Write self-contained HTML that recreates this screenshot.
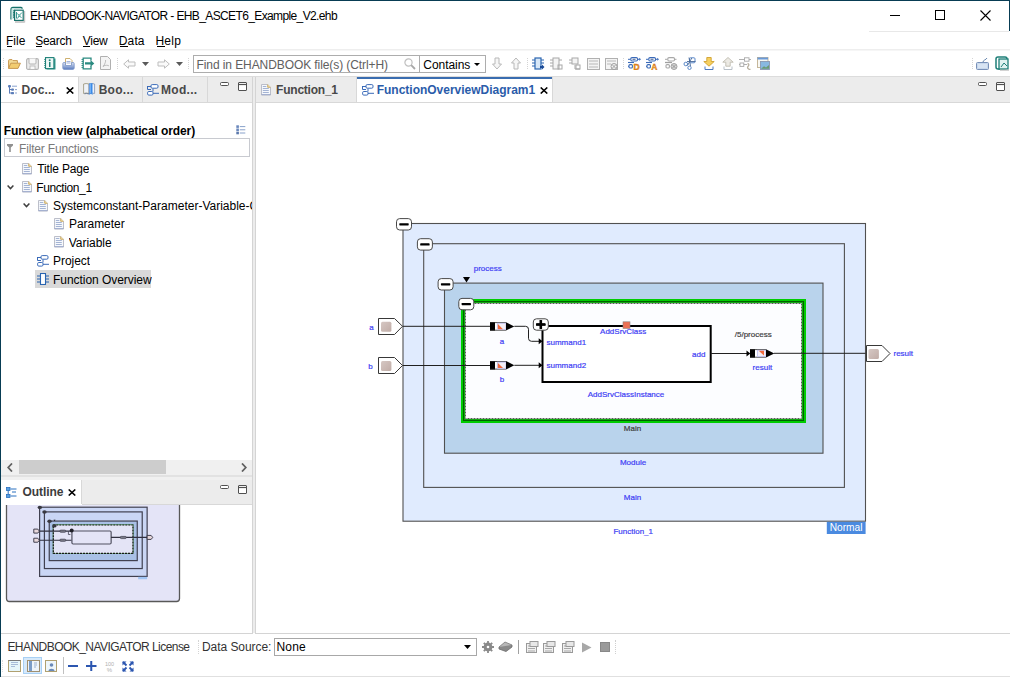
<!DOCTYPE html>
<html><head><meta charset="utf-8">
<style>
*{margin:0;padding:0;box-sizing:border-box}
html,body{width:1010px;height:677px;overflow:hidden;background:#fff;font-family:"Liberation Sans",sans-serif;color:#000}
.a{position:absolute}
.t{position:absolute;white-space:nowrap;line-height:1}
</style></head><body>
<div class="a" style="left:0;top:0;width:1010px;height:677px;background:#fff">

<!-- window border -->
<div class="a" style="left:0;top:0;width:1010px;height:1px;background:#083c54"></div>
<div class="a" style="left:0;top:0;width:1px;height:677px;background:#083c54"></div>

<!-- title -->
<div class="t" style="left:30px;top:10.00px;font-size:12px;color:#000;letter-spacing:-0.620px">EHANDBOOK-NAVIGATOR - EHB_ASCET6_Example_V2.ehb</div>


<!-- title icon -->
<svg class="a" style="left:6px;top:4px" width="22" height="22" viewBox="0 0 22 22">
<rect x="9" y="17.3" width="9.5" height="1.4" fill="#b8b8b8"/><rect x="18" y="7" width="1.2" height="11.5" fill="#c8c8c8"/>
<path d="M5 15.5V6Q5 3.5 7 3.5H15Q16.2 3.5 16.2 4.8" fill="none" stroke="#17716a" stroke-width="1.3"/>
<rect x="5.6" y="4.2" width="3" height="11" fill="#cfe9e5"/>
<path d="M7.2 6.5l1.4 0.9-1.4 0.9 1.4 0.9-1.4 0.9 1.4 0.9-1.4 0.9 1.4 0.9-1.4 0.9" fill="none" stroke="#17716a" stroke-width="0.9"/>
<rect x="8.6" y="6.2" width="8.6" height="10.2" fill="#fff" stroke="#17716a" stroke-width="1.2"/>
<path d="M10.5 8v6.5M11.5 14.5L13 12L15.5 13.5M11.5 9.5L13 11.5L16 8.5" fill="none" stroke="#3a9a90" stroke-width="1"/>
<circle cx="13.6" cy="11.3" r="1" fill="#7cc0b8"/>
</svg>
<!-- window controls -->
<div class="a" style="left:890px;top:15px;width:10px;height:1px;background:#000"></div>
<div class="a" style="left:935px;top:10px;width:10px;height:10px;border:1px solid #000"></div>
<svg class="a" style="left:980px;top:10px" width="11" height="11" viewBox="0 0 11 11"><path d="M0.5 0.5L10.5 10.5M10.5 0.5L0.5 10.5" stroke="#000" stroke-width="1.1"/></svg>
<div class="a" style="left:1009px;top:0;width:1px;height:31px;background:#083c54"></div>
<div class="a" style="left:869px;top:31px;width:140px;height:1px;background:#e8e8e8"></div>

<!-- menu -->
<div class="t" style="left:6px;top:35.20px;font-size:12px;color:#000;letter-spacing:0.033px">File</div>
<div class="t" style="left:35.2px;top:35.20px;font-size:12px;color:#000;letter-spacing:-0.260px">Search</div>
<div class="t" style="left:82.8px;top:35.20px;font-size:12px;color:#000;letter-spacing:-0.300px">View</div>
<div class="t" style="left:118.8px;top:35.20px;font-size:12px;color:#000;letter-spacing:0.133px">Data</div>
<div class="t" style="left:155.4px;top:35.20px;font-size:12px;color:#000;letter-spacing:0.300px">Help</div>
<div class="a" style="left:1px;top:49px;width:1009px;height:1px;background:#eeeeee"></div><div class="a" style="left:1px;top:50px;width:1009px;height:1px;background:#f6f6f6"></div>

<div class="a" style="left:7px;top:46px;width:5px;height:1px;background:#000"></div>
<div class="a" style="left:36px;top:46px;width:6px;height:1px;background:#000"></div>
<div class="a" style="left:83px;top:46px;width:7px;height:1px;background:#000"></div>
<div class="a" style="left:120px;top:46px;width:8px;height:1px;background:#000"></div>
<div class="a" style="left:157px;top:46px;width:8px;height:1px;background:#000"></div>
<div class="a" style="left:3px;top:58px;width:1px;height:11px;border-left:1px dotted #d4d4d4"></div>
<!-- toolbar -->
<svg class="a" style="left:8px;top:59px" width="13" height="10" viewBox="0 0 13 10"><path d="M0.6 9.4V1.6Q0.6 0.6 1.6 0.6H4L5 1.6H9.4V4" fill="#f4dc98" stroke="#c89850" stroke-width="1"/><path d="M0.6 9.4L2.8 4.2H12.4L10 9.4z" fill="#f2cc70" stroke="#c89850" stroke-width="1"/></svg>
<svg class="a" style="left:26px;top:58px" width="13" height="12" viewBox="0 0 13 12"><rect x="0.6" y="0.6" width="11.8" height="10.8" rx="1.5" fill="#ececec" stroke="#b4b4b4" stroke-width="1.1"/><path d="M3 0.6V5Q3 6 4 6H9Q10 6 10 5V0.6" fill="#f8f8f8" stroke="#b4b4b4"/><rect x="4" y="8" width="5" height="3.4" fill="#f8f8f8" stroke="#b4b4b4" stroke-width="0.8"/></svg>
<svg class="a" style="left:44px;top:57px" width="12" height="13" viewBox="0 0 12 13"><rect x="2.5" y="1.5" width="9" height="11" fill="#3a9a90"/><rect x="1.5" y="0.6" width="8.4" height="11" fill="#eef8f6" stroke="#1e8078" stroke-width="1.1"/><path d="M0.3 2.5h1.6M0.3 4.5h1.6M0.3 6.5h1.6M0.3 8.5h1.6M0.3 10.5h1.6" stroke="#1e8078" stroke-width="0.9"/><circle cx="5.7" cy="3.3" r="1" fill="#1e8078"/><rect x="5" y="5" width="1.5" height="5" fill="#1e8078"/></svg>
<svg class="a" style="left:62px;top:58px" width="13" height="12" viewBox="0 0 13 12"><defs><linearGradient id="trg" x1="0" y1="0" x2="0" y2="1"><stop offset="0" stop-color="#dfe6f4"/><stop offset="1" stop-color="#5a7cc0"/></linearGradient></defs><path d="M3.5 7V0.5H8L10 2.5V7" fill="#fff" stroke="#c8a860" stroke-width="0.9"/><path d="M4.5 3.5h4M4.5 5h4" stroke="#8aa0d0" stroke-width="0.8"/><path d="M0.8 5.5Q0.8 4.5 2 4.5H3.5V7.5H9.5V4.5H11Q12.2 4.5 12.2 5.5V10Q12.2 11.4 10.8 11.4H2.2Q0.8 11.4 0.8 10z" fill="url(#trg)" stroke="#7a94c8" stroke-width="0.8"/></svg>
<svg class="a" style="left:81px;top:57px" width="14" height="13" viewBox="0 0 14 13"><path d="M10 3.5V1.2H2.2v10.6H10V9" fill="none" stroke="#2a8a80" stroke-width="1.3"/><path d="M0.5 2.5h1.5M0.5 4.5h1.5M0.5 6.5h1.5M0.5 8.5h1.5M0.5 10.5h1.5" stroke="#2a8a80" stroke-width="0.9"/><path d="M4 5.2h5.5V3L13.3 6.4L9.5 9.8V7.6H4z" fill="#2a8a80"/></svg>
<svg class="a" style="left:100px;top:56px" width="11" height="14" viewBox="0 0 11 14"><path d="M0.5 0.5h7l3 3v10h-10z" fill="#f4f4f4" stroke="#b0b0b0"/><path d="M3 11c2-3 3-6 2.5-7M3 10c3-1 5-1 6 0" stroke="#b0b0b0" fill="none" stroke-width="0.8"/></svg>
<div class="a" style="left:117px;top:58px;width:1px;height:11px;border-left:1px dotted #d4d4d4"></div>
<svg class="a" style="left:123px;top:59px" width="13" height="10" viewBox="0 0 13 10"><path d="M0.7 5L5.5 0.8V3h6.5v4H5.5v2.2z" fill="#fafafa" stroke="#bdbdbd" stroke-width="1"/></svg>
<svg class="a" style="left:142px;top:62px" width="7" height="4" viewBox="0 0 7 4"><path d="M0 0h7L3.5 4z" fill="#5a5a5a"/></svg>
<svg class="a" style="left:157px;top:59px" width="13" height="10" viewBox="0 0 13 10"><path d="M12.3 5L7.5 0.8V3H1v4h6.5v2.2z" fill="#fafafa" stroke="#bdbdbd" stroke-width="1"/></svg>
<svg class="a" style="left:176px;top:62px" width="7" height="4" viewBox="0 0 7 4"><path d="M0 0h7L3.5 4z" fill="#5a5a5a"/></svg>
<div class="a" style="left:188px;top:58px;width:1px;height:11px;border-left:1px dotted #d4d4d4"></div>
<div class="a" style="left:193px;top:55px;width:293px;height:18px;border:1px solid #adadad;background:#fff"></div>
<div class="a" style="left:419px;top:56px;width:1px;height:16px;background:#adadad"></div>
<div class="t" style="left:196.5px;top:59.00px;font-size:12px;color:#606060;letter-spacing:-0.085px">Find in EHANDBOOK file(s) (Ctrl+H)</div>
<svg class="a" style="left:404px;top:58px" width="12" height="12" viewBox="0 0 12 12"><circle cx="4.5" cy="4.5" r="3.6" fill="none" stroke="#c0c0c0" stroke-width="1.2"/><path d="M7.2 7.2L11 11" stroke="#a8a8a8" stroke-width="1.8"/></svg>
<div class="t" style="left:423.3px;top:59.00px;font-size:12px;color:#000;letter-spacing:-0.057px">Contains</div>
<svg class="a" style="left:474px;top:63px" width="6" height="3" viewBox="0 0 6 3"><path d="M0 0h6L3 3z" fill="#000"/></svg>
<svg class="a" style="left:492px;top:57px" width="10" height="13" viewBox="0 0 10 13"><path d="M3 1h4v6h2.5L5 12 0.5 7H3z" fill="#f6f6f6" stroke="#b8b8b8"/></svg>
<svg class="a" style="left:511px;top:57px" width="10" height="13" viewBox="0 0 10 13"><path d="M3 12h4V6h2.5L5 1 0.5 6H3z" fill="#f6f6f6" stroke="#b8b8b8"/></svg>
<div class="a" style="left:527px;top:58px;width:1px;height:11px;border-left:1px dotted #d4d4d4"></div>
<svg class="a" style="left:532px;top:57px" width="13" height="13" viewBox="0 0 13 13"><rect x="3" y="1" width="6" height="11" fill="#d8e8f8" stroke="#2a64b0" stroke-width="1.2"/><path d="M0 3h3M0 6h3M0 9h3M9 3h3M9 6h3" stroke="#2a64b0" stroke-width="1.2"/><path d="M8 9h2V7.5l2.5 2.5L10 12.5V11H8z" fill="#1a4a98"/></svg>
<svg class="a" style="left:550px;top:57px" width="13" height="13" viewBox="0 0 13 13"><rect x="3" y="1" width="6" height="11" fill="#f4f4f4" stroke="#a8a8a8" stroke-width="1"/><path d="M0 3h3M0 6h3M0 9h3M9 3h3" stroke="#a8a8a8"/><rect x="8" y="8" width="4" height="4" fill="none" stroke="#a8a8a8"/></svg>
<svg class="a" style="left:569px;top:57px" width="12" height="13" viewBox="0 0 12 13"><rect x="3" y="1" width="6" height="6" fill="#f4f4f4" stroke="#a8a8a8"/><path d="M0 3h3M0 6h3M6 8v4h5" stroke="#a8a8a8" fill="none"/><rect x="7" y="8" width="4" height="4" fill="none" stroke="#a8a8a8"/></svg>
<svg class="a" style="left:587px;top:58px" width="13" height="12" viewBox="0 0 13 12"><rect x="0.5" y="0.5" width="12" height="11" fill="#f4f4f4" stroke="#b0b0b0"/><path d="M2 3h9M2 6h9M2 9h9" stroke="#b8b8b8" stroke-width="1.2"/></svg>
<svg class="a" style="left:605px;top:58px" width="14" height="12" viewBox="0 0 14 12"><rect x="0.5" y="0.5" width="12" height="11" fill="#f4f4f4" stroke="#b0b0b0"/><path d="M2 3h9M2 6h4" stroke="#b8b8b8"/><circle cx="9" cy="8.5" r="3" fill="none" stroke="#a0a0a0"/><path d="M7 6.5l4 4M11 6.5l-4 4" stroke="#a0a0a0"/></svg>
<div class="a" style="left:623px;top:58px;width:1px;height:11px;border-left:1px dotted #d4d4d4"></div>
<svg class="a" style="left:628px;top:57px" width="13" height="13" viewBox="0 0 13 13"><path d="M0 2.3h2.5M9.5 2.3h2" stroke="#3a6ab8" stroke-width="1"/><path d="M11.2 0.8L13 2.3L11.2 3.8z" fill="#3a6ab8"/><rect x="2.8" y="0.6" width="6.7" height="3.4" rx="1.2" fill="#fff" stroke="#3a6ab8" stroke-width="1.1"/><path d="M4.5 2.3h3" stroke="#1a3a78" stroke-width="0.8"/><path d="M0 5.5h6" stroke="#3a6ab8" stroke-width="1.1"/><path d="M0 9.3h1" stroke="#3a6ab8"/><rect x="1" y="7.6" width="3.4" height="3.4" rx="1" fill="#fff" stroke="#3a6ab8" stroke-width="1.1"/><text x="5.6" y="12.8" font-family="Liberation Sans" font-weight="bold" font-size="8.5" fill="#e89020" stroke="#d07010" stroke-width="0.4">D</text></svg>
<svg class="a" style="left:646px;top:57px" width="13" height="13" viewBox="0 0 13 13"><path d="M0 2.3h2.5M9.5 2.3h2" stroke="#3a6ab8" stroke-width="1"/><path d="M11.2 0.8L13 2.3L11.2 3.8z" fill="#3a6ab8"/><rect x="2.8" y="0.6" width="6.7" height="3.4" rx="1.2" fill="#fff" stroke="#3a6ab8" stroke-width="1.1"/><path d="M4.5 2.3h3" stroke="#1a3a78" stroke-width="0.8"/><path d="M0 5.5h6" stroke="#3a6ab8" stroke-width="1.1"/><path d="M0 9.3h1" stroke="#3a6ab8"/><rect x="1" y="7.6" width="3.4" height="3.4" rx="1" fill="#fff" stroke="#3a6ab8" stroke-width="1.1"/><text x="5.2" y="12.8" font-family="Liberation Sans" font-weight="bold" font-size="8.5" fill="#f0a030" stroke="#d07010" stroke-width="0.4">A</text></svg>
<svg class="a" style="left:665px;top:57px" width="13" height="13" viewBox="0 0 13 13"><path d="M0 2.3h2.5M9.5 2.3h2" stroke="#a8a8a8" stroke-width="1"/><rect x="2.8" y="0.6" width="6.7" height="3.4" rx="1.2" fill="#fff" stroke="#a8a8a8" stroke-width="1.1"/><path d="M0 5.5h7" stroke="#a0a0a0" stroke-width="1.3"/><rect x="1" y="7.6" width="3.4" height="3.4" rx="1" fill="#fff" stroke="#a8a8a8" stroke-width="1.1"/><circle cx="9" cy="9.5" r="3" fill="#d8d8d8" stroke="#a0a0a0" stroke-width="1"/><path d="M7.3 7.8l3.4 3.4M10.7 7.8l-3.4 3.4" stroke="#909090" stroke-width="0.9"/></svg>
<svg class="a" style="left:683px;top:57px" width="13" height="13" viewBox="0 0 13 13"><rect x="6.5" y="0.8" width="5.5" height="5" rx="1" fill="none" stroke="#5a88c8" stroke-width="1"/><circle cx="2.8" cy="7" r="1.8" fill="none" stroke="#5a88c8" stroke-width="1"/><circle cx="6.5" cy="10.8" r="1.7" fill="none" stroke="#5a88c8" stroke-width="1"/><path d="M4 4.5h8.5M6 0.5L7.5 9M8.8 1L4.5 8.5" stroke="#4a6a98" stroke-width="0.9"/></svg>
<svg class="a" style="left:703px;top:57px" width="12" height="13" viewBox="0 0 12 13"><path d="M2 9.5v3h8v-3" stroke="#4a78c0" fill="none" stroke-width="1"/><path d="M3.8 0.5h4.4v4h3L6 9.2 0.8 4.5h3z" fill="#f6d060" stroke="#d0a030" stroke-width="0.9"/></svg>
<svg class="a" style="left:722px;top:57px" width="12" height="13" viewBox="0 0 12 13"><path d="M2 9.5v3h8v-3" stroke="#b8c0c8" fill="none" stroke-width="1"/><path d="M3.8 9.2h4.4v-4h3L6 0.5 0.8 5.2h3z" fill="#eceae4" stroke="#c0bcb0" stroke-width="0.9"/></svg>
<svg class="a" style="left:739px;top:57px" width="13" height="13" viewBox="0 0 13 13"><path d="M0 2.5h12M0 7.5h8" stroke="#b0b0b0" stroke-width="1"/><rect x="5.5" y="0.8" width="4.5" height="3.4" fill="#fff" stroke="#a8a8a8" stroke-width="0.9"/><rect x="1" y="6" width="3.8" height="3.4" fill="#fff" stroke="#a8a8a8" stroke-width="0.9"/><path d="M8.5 6.5c2 0.5 1.5 2 0.5 3s0 3 2.5 3" stroke="#b8b0a0" fill="none" stroke-width="1.3"/></svg>
<svg class="a" style="left:757px;top:57px" width="13" height="13" viewBox="0 0 13 13"><rect x="0.5" y="0.5" width="10.5" height="10" fill="#f8f8f4" stroke="#c0b090" stroke-width="0.9"/><rect x="0.5" y="0.5" width="10.5" height="2" fill="#6a9ad8"/><rect x="3.5" y="4.5" width="9" height="8" fill="#88b8e0" stroke="#8a98b0" stroke-width="0.9"/><path d="M4 11.8l3-2.5 2 1.2 3-2.5v3.8z" fill="#6a9a70"/></svg>
<div class="a" style="left:972px;top:58px;width:1px;height:11px;border-left:1px dotted #d4d4d4"></div>
<svg class="a" style="left:976px;top:57px" width="14" height="13" viewBox="0 0 14 13"><path d="M7 5c0-2 3-2 4-4" stroke="#6888b0" fill="none" stroke-width="1"/><rect x="0.5" y="5.5" width="12" height="7" rx="1" fill="#c8d8ec" stroke="#7890b8"/><path d="M2 8h9M2 10h9" stroke="#e8f0fa"/></svg>
<svg class="a" style="left:995px;top:56px" width="14" height="15" viewBox="0 0 14 15"><rect x="1" y="1" width="11" height="12" rx="2" fill="#fff" stroke="#1e7f78" stroke-width="1.5"/><rect x="4" y="3" width="9" height="10" fill="#e0f2f0" stroke="#1e7f78" stroke-width="1.3"/><path d="M6 11l3-4 3 3" stroke="#1e7f78" fill="none"/><rect x="5" y="13.5" width="9" height="1.2" fill="#c0c0c0"/></svg>
<!-- toolbar bottom border -->
<div class="a" style="left:1px;top:76px;width:1009px;height:1px;background:#dcdcdc"></div>

<!-- left tab row -->
<div class="a" style="left:1px;top:77px;width:251px;height:25px;background:#ececec"></div>
<div class="a" style="left:1px;top:77px;width:77px;height:26px;background:#fff"></div>
<div class="a" style="left:1px;top:102px;width:251px;height:1px;background:#d8d8d8"></div>
<!-- editor tab row -->
<div class="a" style="left:255px;top:77px;width:755px;height:25px;background:#ececec"></div>
<div class="a" style="left:357px;top:77px;width:196px;height:26px;background:#fff"></div>
<div class="a" style="left:357px;top:77px;width:196px;height:2px;background:#3a6db0"></div>
<div class="a" style="left:255px;top:102px;width:755px;height:1px;background:#d8d8d8"></div>

<!-- left tabs content -->
<svg class="a" style="left:8px;top:85px" width="10" height="10" viewBox="0 0 10 10"><path d="M1.5 1v7.5M1.5 4.5h2M1.5 8h2" stroke="#5a7cb8" stroke-width="1"/><rect x="0" y="0" width="3" height="2.5" rx="1" fill="#5a7cb8"/><rect x="3" y="3.5" width="3" height="2.2" rx="1" fill="#5a7cb8"/><rect x="3" y="7" width="3" height="2.2" rx="0.6" fill="#5a7cb8"/><path d="M4 1.2h5M7 4.6h2M7 8h2" stroke="#7a96c8" stroke-width="0.9"/></svg>
<div class="t" style="left:21.5px;top:83.50px;font-size:12px;color:#484848;letter-spacing:0.100px;font-weight:bold">Doc...</div>
<svg class="a" style="left:66px;top:87px" width="8" height="7" viewBox="0 0 8 7"><path d="M0.7 0.5L7.3 6.5M7.3 0.5L0.7 6.5" stroke="#000" stroke-width="1.6"/></svg>
<div class="a" style="left:78px;top:77px;width:1px;height:25px;background:#d8d8d8"></div>
<svg class="a" style="left:83px;top:83px" width="13" height="12" viewBox="0 0 13 12"><path d="M0.6 1Q3 0 6 1V10.5Q3 9.5 0.6 10.5z" fill="#eef2f8" stroke="#a09a80" stroke-width="0.9"/><path d="M6 1Q9 0 11.6 1V10.5Q9 9.5 6 10.5z" fill="#eef2f8" stroke="#8a9ab8" stroke-width="0.9"/><path d="M1.5 10.8Q3.5 10 6 11" stroke="#6a7a98" stroke-width="0.9" fill="none"/><path d="M6.3 0.3H9.5V12L7.9 10.5L6.3 12z" fill="#3a8ae8"/><path d="M7.4 0.5V10" stroke="#8ac0f8" stroke-width="0.8"/></svg>
<div class="t" style="left:98.7px;top:83.50px;font-size:12px;color:#484848;letter-spacing:0.260px;font-weight:bold">Boo...</div>
<div class="a" style="left:142px;top:77px;width:1px;height:25px;background:#d8d8d8"></div>
<svg class="a" style="left:147px;top:84px" width="12" height="12" viewBox="0 0 12 12"><path d="M0 2.5h4M0.5 2.5V5.5H4M6 4.5V7.5M6 9.3h6" stroke="#3a6ab8" stroke-width="1" fill="none"/><rect x="4" y="0.6" width="7" height="3.6" rx="1.2" fill="#fff" stroke="#3a6ab8" stroke-width="1"/><rect x="0.6" y="7.5" width="5.4" height="3.6" rx="1.2" fill="#fff" stroke="#3a6ab8" stroke-width="1"/></svg>
<div class="t" style="left:161px;top:83.50px;font-size:12px;color:#484848;letter-spacing:0.300px;font-weight:bold">Mod...</div>
<div class="a" style="left:207px;top:77px;width:1px;height:25px;background:#d8d8d8"></div>
<svg class="a" style="left:220px;top:82px" width="28" height="10" viewBox="0 0 28 10"><rect x="0.5" y="0.5" width="8" height="3" rx="1" fill="#fff" stroke="#505050"/><rect x="18.5" y="0.5" width="8" height="8" rx="0.5" fill="#fff" stroke="#505050"/><path d="M19 2.5h7" stroke="#505050" stroke-width="1.2"/></svg>
<svg class="a" style="left:261px;top:84px" width="10" height="12" viewBox="0 0 10 12"><path d="M0.5 0.5h6.2l2.8 2.8v7.7h-9z" fill="#f6f8fc" stroke="#b4b8c4" stroke-width="0.9"/><path d="M6.7 0.5v2.8h2.8" fill="#f2dca0" stroke="#c8a860" stroke-width="0.9"/><path d="M1.8 2.5h3.5M1.8 4.5h6M1.8 6.5h6M1.8 8.5h6" stroke="#a4b4d4" stroke-width="1.1"/><path d="M0.5 10.6h9" stroke="#98a8cc" stroke-width="0.9"/></svg>
<div class="t" style="left:276.1px;top:83.70px;font-size:12px;color:#484848;letter-spacing:-0.233px;font-weight:bold">Function_1</div>
<div class="a" style="left:356px;top:77px;width:1px;height:25px;background:#d8d8d8"></div>
<div class="a" style="left:552px;top:77px;width:1px;height:25px;background:#d8d8d8"></div>
<svg class="a" style="left:362px;top:84px" width="12" height="12" viewBox="0 0 12 12"><path d="M0 2.5h4M0.5 2.5V5.5H4M6 4.5V7.5M6 9.3h6" stroke="#3a6ab8" stroke-width="1" fill="none"/><rect x="4" y="0.6" width="7" height="3.6" rx="1.2" fill="#fff" stroke="#3a6ab8" stroke-width="1"/><rect x="0.6" y="7.5" width="5.4" height="3.6" rx="1.2" fill="#fff" stroke="#3a6ab8" stroke-width="1"/></svg>
<div class="t" style="left:376.7px;top:83.70px;font-size:12px;color:#2a5caa;letter-spacing:-0.009px;font-weight:bold">FunctionOverviewDiagram1</div>
<svg class="a" style="left:540px;top:87px" width="8" height="7" viewBox="0 0 8 7"><path d="M0.7 0.5L7.3 6.5M7.3 0.5L0.7 6.5" stroke="#000" stroke-width="1.6"/></svg>
<svg class="a" style="left:978px;top:82px" width="28" height="10" viewBox="0 0 28 10"><rect x="0.5" y="0.5" width="8" height="3" rx="1" fill="#fff" stroke="#505050"/><rect x="18.5" y="0.5" width="8" height="8" rx="0.5" fill="#fff" stroke="#505050"/><path d="M19 2.5h7" stroke="#505050" stroke-width="1.2"/></svg>
<div class="t" style="left:3.7px;top:124.90px;font-size:12px;color:#000;letter-spacing:-0.097px;font-weight:bold">Function view (alphabetical order)</div>
<svg class="a" style="left:236px;top:125px" width="10" height="10" viewBox="0 0 10 10"><rect x="0.3" y="0.3" width="2.6" height="2.6" fill="#6a88bc"/><rect x="0.3" y="3.5" width="2.6" height="2.6" fill="#6a88bc"/><rect x="0.3" y="6.7" width="2.6" height="2.6" fill="#5a78ac"/><path d="M3.8 1.6h5.5M3.8 4.8h5.5M3.8 8h5.5" stroke="#7a96c4" stroke-width="0.9"/></svg>
<div class="a" style="left:4px;top:138px;width:246px;height:19px;border:1px solid #c8cad0;background:#fff"></div>
<svg class="a" style="left:7px;top:144px" width="6" height="8" viewBox="0 0 6 8"><path d="M0 0h6v1.5L3.8 3.5V8H2.2V3.5L0 1.5z" fill="#909090"/></svg>
<div class="t" style="left:19px;top:142.60px;font-size:12px;color:#7a7a7a;letter-spacing:-0.167px">Filter Functions</div>
<div class="a" style="left:35px;top:270px;width:116px;height:18px;background:#d9d9d9"></div>
<svg class="a" style="left:22px;top:163px" width="10" height="12" viewBox="0 0 10 12"><path d="M0.5 0.5h6.2l2.8 2.8v7.7h-9z" fill="#f6f8fc" stroke="#b4b8c4" stroke-width="0.9"/><path d="M6.7 0.5v2.8h2.8" fill="#f2dca0" stroke="#c8a860" stroke-width="0.9"/><path d="M1.8 2.5h3.5M1.8 4.5h6M1.8 6.5h6M1.8 8.5h6" stroke="#a4b4d4" stroke-width="1.1"/><path d="M0.5 10.6h9" stroke="#98a8cc" stroke-width="0.9"/></svg>
<div class="t" style="left:37.3px;top:161.70px;font-size:12px;color:#000;letter-spacing:-0.156px;max-width:216.4px;overflow:hidden;line-height:1.25">Title Page</div>
<svg class="a" style="left:7px;top:185px" width="7" height="5" viewBox="0 0 7 5"><path d="M0.6 0.6L3.5 3.6L6.4 0.6" stroke="#404040" fill="none" stroke-width="1.5"/></svg>
<svg class="a" style="left:22px;top:181px" width="10" height="12" viewBox="0 0 10 12"><path d="M0.5 0.5h6.2l2.8 2.8v7.7h-9z" fill="#f6f8fc" stroke="#b4b8c4" stroke-width="0.9"/><path d="M6.7 0.5v2.8h2.8" fill="#f2dca0" stroke="#c8a860" stroke-width="0.9"/><path d="M1.8 2.5h3.5M1.8 4.5h6M1.8 6.5h6M1.8 8.5h6" stroke="#a4b4d4" stroke-width="1.1"/><path d="M0.5 10.6h9" stroke="#98a8cc" stroke-width="0.9"/></svg>
<div class="t" style="left:36.3px;top:180.70px;font-size:12px;color:#000;letter-spacing:-0.400px;max-width:216.4px;overflow:hidden;line-height:1.25">Function_1</div>
<svg class="a" style="left:23px;top:203px" width="7" height="5" viewBox="0 0 7 5"><path d="M0.6 0.6L3.5 3.6L6.4 0.6" stroke="#404040" fill="none" stroke-width="1.5"/></svg>
<svg class="a" style="left:38px;top:200px" width="10" height="12" viewBox="0 0 10 12"><path d="M0.5 0.5h6.2l2.8 2.8v7.7h-9z" fill="#f6f8fc" stroke="#b4b8c4" stroke-width="0.9"/><path d="M6.7 0.5v2.8h2.8" fill="#f2dca0" stroke="#c8a860" stroke-width="0.9"/><path d="M1.8 2.5h3.5M1.8 4.5h6M1.8 6.5h6M1.8 8.5h6" stroke="#a4b4d4" stroke-width="1.1"/><path d="M0.5 10.6h9" stroke="#98a8cc" stroke-width="0.9"/></svg>
<div class="t" style="left:53.0px;top:199.1px;font-size:12px;color:#000;letter-spacing:0px;max-width:200.8px;overflow:hidden;line-height:1.25">Systemconstant-Parameter-Variable-C</div>
<svg class="a" style="left:54px;top:218px" width="10" height="12" viewBox="0 0 10 12"><path d="M0.5 0.5h6.2l2.8 2.8v7.7h-9z" fill="#f6f8fc" stroke="#b4b8c4" stroke-width="0.9"/><path d="M6.7 0.5v2.8h2.8" fill="#f2dca0" stroke="#c8a860" stroke-width="0.9"/><path d="M1.8 2.5h3.5M1.8 4.5h6M1.8 6.5h6M1.8 8.5h6" stroke="#a4b4d4" stroke-width="1.1"/><path d="M0.5 10.6h9" stroke="#98a8cc" stroke-width="0.9"/></svg>
<div class="t" style="left:69.0px;top:217.4px;font-size:12px;color:#000;letter-spacing:-0.05px;max-width:184.8px;overflow:hidden;line-height:1.25">Parameter</div>
<svg class="a" style="left:54px;top:236px" width="10" height="12" viewBox="0 0 10 12"><path d="M0.5 0.5h6.2l2.8 2.8v7.7h-9z" fill="#f6f8fc" stroke="#b4b8c4" stroke-width="0.9"/><path d="M6.7 0.5v2.8h2.8" fill="#f2dca0" stroke="#c8a860" stroke-width="0.9"/><path d="M1.8 2.5h3.5M1.8 4.5h6M1.8 6.5h6M1.8 8.5h6" stroke="#a4b4d4" stroke-width="1.1"/><path d="M0.5 10.6h9" stroke="#98a8cc" stroke-width="0.9"/></svg>
<div class="t" style="left:68.8px;top:235.7px;font-size:12px;color:#000;letter-spacing:-0.05px;max-width:185.0px;overflow:hidden;line-height:1.25">Variable</div>
<svg class="a" style="left:37px;top:255px" width="12" height="12" viewBox="0 0 12 12"><path d="M0 2.5h4M0.5 2.5V5.5H4M6 4.5V7.5M6 9.3h6" stroke="#3a6ab8" stroke-width="1" fill="none"/><rect x="4" y="0.6" width="7" height="3.6" rx="1.2" fill="#fff" stroke="#3a6ab8" stroke-width="1"/><rect x="0.6" y="7.5" width="5.4" height="3.6" rx="1.2" fill="#fff" stroke="#3a6ab8" stroke-width="1"/></svg>
<div class="t" style="left:53.0px;top:254.0px;font-size:12px;color:#000;letter-spacing:-0.05px;max-width:200.8px;overflow:hidden;line-height:1.25">Project</div>
<svg class="a" style="left:37px;top:273px" width="12" height="12" viewBox="0 0 12 12"><rect x="3.5" y="0.5" width="5" height="11" fill="#fff" stroke="#2a64b0" stroke-width="1.1"/><path d="M0 3h3.5M0 6h3.5M0 9h3.5M8.5 3h3.5M8.5 6h3.5M8.5 9h3.5" stroke="#2a64b0" stroke-width="1.1"/></svg>
<div class="t" style="left:53.0px;top:272.6px;font-size:12px;color:#000;letter-spacing:-0.05px;max-width:200.8px;overflow:hidden;line-height:1.25">Function Overview</div>
<div class="a" style="left:1px;top:460px;width:251px;height:15px;background:#f0f0f0"></div>
<div class="a" style="left:19px;top:460px;width:147px;height:14px;background:#cdcdcd"></div>
<svg class="a" style="left:7px;top:463px" width="6" height="9" viewBox="0 0 6 9"><path d="M5 0.5L1.2 4.5L5 8.5" stroke="#606060" fill="none" stroke-width="1.8"/></svg>
<svg class="a" style="left:241px;top:463px" width="6" height="9" viewBox="0 0 6 9"><path d="M1 0.5L4.8 4.5L1 8.5" stroke="#606060" fill="none" stroke-width="1.8"/></svg>
<div class="a" style="left:1px;top:475px;width:251px;height:2px;background:#e2e2e2"></div><div class="a" style="left:1px;top:477px;width:251px;height:3px;background:#f0f0f0"></div>
<div class="a" style="left:1px;top:480px;width:251px;height:24px;background:#ececec"></div>
<div class="a" style="left:1px;top:480px;width:80px;height:25px;background:#fff"></div>
<div class="a" style="left:81px;top:480px;width:1px;height:24px;background:#d8d8d8"></div>
<div class="a" style="left:82px;top:504px;width:170px;height:1px;background:#d8d8d8"></div>
<svg class="a" style="left:6px;top:487px" width="11" height="12" viewBox="0 0 11 12"><rect x="0.5" y="0.5" width="3.5" height="3" fill="#5aa0e0" stroke="#2a70c0" stroke-width="0.8"/><rect x="0.5" y="7.5" width="3.5" height="3" fill="#5aa0e0" stroke="#2a70c0" stroke-width="0.8"/><path d="M2.2 3.5v4M4.5 2h6M6 5h4M4.5 9h6" stroke="#2a70c0" stroke-width="1"/></svg>
<div class="t" style="left:22.5px;top:486.00px;font-size:12px;color:#3c3c3c;letter-spacing:-0.083px;font-weight:bold">Outline</div>
<svg class="a" style="left:68px;top:489px" width="8" height="7" viewBox="0 0 8 7"><path d="M0.7 0.5L7.3 6.5M7.3 0.5L0.7 6.5" stroke="#000" stroke-width="1.6"/></svg>
<svg class="a" style="left:220px;top:485px" width="28" height="10" viewBox="0 0 28 10"><rect x="0.5" y="0.5" width="8" height="3" rx="1" fill="#fff" stroke="#505050"/><rect x="18.5" y="0.5" width="8" height="8" rx="0.5" fill="#fff" stroke="#505050"/><path d="M19 2.5h7" stroke="#505050" stroke-width="1.2"/></svg>
<!-- diagram -->
<svg class="a" style="left:0;top:0" width="1010" height="677" viewBox="0 0 1010 677"><defs><linearGradient id="pg" x1="0" y1="0" x2="1" y2="1"><stop offset="0" stop-color="#d6c8c4"/><stop offset="1" stop-color="#c0aca6"/></linearGradient></defs><rect x="403" y="223.5" width="462.5" height="297.7" fill="#e0ebfe" stroke="#505050" stroke-width="1.1"/><rect x="423.7" y="243.7" width="420.7" height="243.7" fill="#e0ebfe" stroke="#505050" stroke-width="1.1"/><rect x="444.5" y="283.1" width="378.5" height="170.1" fill="#b9d3ec" stroke="#505050" stroke-width="1.1"/><rect x="462" y="300" width="343" height="122" fill="#fcfdff" stroke="#00cc00" stroke-width="2"/><rect x="463.5" y="301.5" width="340" height="119" fill="none" stroke="#006000" stroke-width="1"/><rect x="464.5" y="302.5" width="338" height="117" fill="none" stroke="#12a812" stroke-width="1"/><rect x="465.5" y="303.5" width="336" height="115" fill="none" stroke="#5a5a5a" stroke-width="1" stroke-dasharray="2 1"/><rect x="542.5" y="326" width="168.2" height="56" fill="#fff" stroke="#000" stroke-width="2"/><rect x="623" y="321.8" width="7" height="6.7" fill="#ec7055" stroke="#888" stroke-width="0.6"/><path d="M402.5 326.3H490 M514.3 326.3H525.5Q528.5 326.3 528.5 329.3V338.3Q528.5 341.3 531.5 341.3H541" stroke="#202020" stroke-width="1" fill="none"/><path d="M402.5 365.5H490 M514.3 365.3H541" stroke="#202020" stroke-width="1" fill="none"/><path d="M538.7 338.3L542.5 341.3L538.7 344.3z M538.7 362.3L542.5 365.3L538.7 368.3z" fill="#000"/><path d="M710.7 353.5H747 M774 353.3H865.5" stroke="#202020" stroke-width="1" fill="none"/><path d="M746.5 350.5L750.3 353.5L746.5 356.5z" fill="#000"/><rect x="490" y="322.2" width="5" height="8.4" fill="#000"/><rect x="495" y="322.2" width="11" height="8.4" fill="#fff"/><path d="M490 322.59999999999997H506 M490 330.2H506" stroke="#202020" stroke-width="0.8"/><rect x="497.4" y="323.3" width="8.6" height="6.2" fill="#f2eef6" stroke="#c0c0ee" stroke-width="0.9"/><path d="M497.9 324.0V329.2H503z" fill="#f26a3c"/><path d="M506 322.2L514.3 326.4L506 330.59999999999997z" fill="#000"/><rect x="490" y="361.1" width="5" height="8.4" fill="#000"/><rect x="495" y="361.1" width="11" height="8.4" fill="#fff"/><path d="M490 361.5H506 M490 369.1H506" stroke="#202020" stroke-width="0.8"/><rect x="497.4" y="362.20000000000005" width="8.6" height="6.2" fill="#f2eef6" stroke="#c0c0ee" stroke-width="0.9"/><path d="M497.9 362.90000000000003V368.1H503z" fill="#f26a3c"/><path d="M506 361.1L514.3 365.3L506 369.5z" fill="#000"/><rect x="750" y="349.2" width="5" height="8.4" fill="#000"/><rect x="755" y="349.2" width="11" height="8.4" fill="#fff"/><path d="M750 349.59999999999997H766 M750 357.2H766" stroke="#202020" stroke-width="0.8"/><rect x="757.4" y="350.3" width="8.6" height="6.2" fill="#f2eef6" stroke="#c0c0ee" stroke-width="0.9"/><path d="M758.7 350.7H764V355.59999999999997z" fill="#f26a3c"/><path d="M766 349.2L774.3 353.4L766 357.59999999999997z" fill="#000"/><path d="M378.5 318.5H394.5L402.5 326.3L394.5 334.5H378.5z" fill="#fff" stroke="#383838" stroke-width="1"/><rect x="381" y="321.7" width="10.4" height="10" rx="1.5" fill="url(#pg)"/><path d="M378.5 357.5H394.5L402.5 365.5L394.5 373.5H378.5z" fill="#fff" stroke="#383838" stroke-width="1"/><rect x="381" y="360.9" width="10.4" height="10" rx="1.5" fill="url(#pg)"/><path d="M866.5 345.5H882.0L890.0 353.5L882.0 361.5H866.5z" fill="#fff" stroke="#383838" stroke-width="1"/><rect x="868.5" y="348.9" width="10.4" height="10" rx="1.5" fill="url(#pg)"/><path d="M463 277H470L466.5 282.5z" fill="#000"/><rect x="396.5" y="218.60000000000002" width="15" height="11.4" rx="3.2" fill="#fff" stroke="#484848" stroke-width="1"/><rect x="399.3" y="223.20000000000002" width="9.4" height="2.2" rx="0.6" fill="#000"/><rect x="417.4" y="238.70000000000002" width="15" height="11.4" rx="3.2" fill="#fff" stroke="#484848" stroke-width="1"/><rect x="420.2" y="243.3" width="9.4" height="2.2" rx="0.6" fill="#000"/><rect x="438.1" y="278.6" width="15" height="11.4" rx="3.2" fill="#fff" stroke="#484848" stroke-width="1"/><rect x="440.90000000000003" y="283.2" width="9.4" height="2.2" rx="0.6" fill="#000"/><rect x="458.8" y="298.40000000000003" width="15" height="11.4" rx="3.2" fill="#fff" stroke="#484848" stroke-width="1"/><rect x="461.6" y="303.0" width="9.4" height="2.2" rx="0.6" fill="#000"/><rect x="533.3" y="318.8" width="15" height="11.4" rx="3.2" fill="#fff" stroke="#484848" stroke-width="1"/><rect x="536.0999999999999" y="323.4" width="9.4" height="2.2" rx="0.6" fill="#000"/><rect x="539.5" y="320.0" width="2.6" height="9" rx="0.6" fill="#000"/><rect x="536.0999999999999" y="323.2" width="9.4" height="2.6" rx="0.6" fill="#000"/><text x="371.6" y="330" font-family="Liberation Sans" font-size="8" stroke-width="0.2" fill="#4040f4" stroke="#4040f4" text-anchor="middle">a</text><text x="370.5" y="368.5" font-family="Liberation Sans" font-size="8" stroke-width="0.2" fill="#4040f4" stroke="#4040f4" text-anchor="middle">b</text><text x="473.7" y="270.7" font-family="Liberation Sans" font-size="8" stroke-width="0.2" fill="#4040f4" stroke="#4040f4" text-anchor="start">process</text><text x="502" y="344.3" font-family="Liberation Sans" font-size="8" stroke-width="0.2" fill="#4040f4" stroke="#4040f4" text-anchor="middle">a</text><text x="502" y="382" font-family="Liberation Sans" font-size="8" stroke-width="0.2" fill="#4040f4" stroke="#4040f4" text-anchor="middle">b</text><text x="546.5" y="344.7" font-family="Liberation Sans" font-size="8" stroke-width="0.2" fill="#4040f4" stroke="#4040f4" text-anchor="start">summand1</text><text x="546.5" y="368.3" font-family="Liberation Sans" font-size="8" stroke-width="0.2" fill="#4040f4" stroke="#4040f4" text-anchor="start">summand2</text><text x="623.2" y="334.3" font-family="Liberation Sans" font-size="8" stroke-width="0.2" fill="#4040f4" stroke="#4040f4" text-anchor="middle">AddSrvClass</text><text x="705.4" y="356.6" font-family="Liberation Sans" font-size="8" stroke-width="0.2" fill="#4040f4" stroke="#4040f4" text-anchor="end">add</text><text x="626" y="397.4" font-family="Liberation Sans" font-size="8" stroke-width="0.2" fill="#4040f4" stroke="#4040f4" text-anchor="middle">AddSrvClassInstance</text><text x="753.2" y="336.5" font-family="Liberation Sans" font-size="8" stroke-width="0.2" fill="#404040" stroke="#404040" text-anchor="middle">/5/process</text><text x="762.4" y="369.6" font-family="Liberation Sans" font-size="8" stroke-width="0.2" fill="#4040f4" stroke="#4040f4" text-anchor="middle">result</text><text x="893.5" y="356.4" font-family="Liberation Sans" font-size="8" stroke-width="0.2" fill="#4040f4" stroke="#4040f4" text-anchor="start">result</text><text x="632.5" y="431.1" font-family="Liberation Sans" font-size="8" stroke-width="0.2" fill="#404040" stroke="#404040" text-anchor="middle">Main</text><text x="633" y="465.1" font-family="Liberation Sans" font-size="8" stroke-width="0.2" fill="#4040f4" stroke="#4040f4" text-anchor="middle">Module</text><text x="632.5" y="499.7" font-family="Liberation Sans" font-size="8" stroke-width="0.2" fill="#4040f4" stroke="#4040f4" text-anchor="middle">Main</text><text x="633.2" y="534.2" font-family="Liberation Sans" font-size="8" stroke-width="0.2" fill="#4040f4" stroke="#4040f4" text-anchor="middle">Function_1</text><rect x="826.8" y="521.8" width="38.8" height="12.2" fill="#4a8ae0"/><text x="846.1" y="530.9" font-family="Liberation Sans" font-size="10.2" fill="#fff" text-anchor="middle">Normal</text></svg>
<!-- /diagram -->
<!-- outline -->
<div class="a" style="left:1px;top:505px;width:251px;height:128px;overflow:hidden"><svg class="a" style="left:-1px;top:-505px" width="1010" height="677" viewBox="0 0 1010 677"><rect x="6.5" y="480" width="173" height="121.5" rx="3" fill="#e4e4f7" stroke="#585858" stroke-width="1.3"/><rect x="39.60" y="507.20" width="107.53" height="69.22" fill="#cad6f5" stroke="#404050" stroke-width="1.2" /><rect x="44.41" y="511.90" width="97.81" height="56.66" fill="#cad6f5" stroke="#404050" stroke-width="1.2" /><rect x="49.25" y="521.06" width="88.00" height="39.55" fill="#a9c0e6" stroke="#404050" stroke-width="1.2" /><rect x="53.09" y="524.75" width="80.07" height="28.92" fill="#e4e4f6" stroke="#308a30" stroke-width="0.6" /><rect x="53.32" y="524.99" width="79.61" height="28.46" fill="none" stroke="#181818" stroke-width="1.2" stroke-dasharray="2 1"/><rect x="71.92" y="530.98" width="39.22" height="13.04" rx="1.2" fill="#e4e4f6" stroke="#505060" stroke-width="1.2"/><path d="M38.90 531.10H71.45 M38.90 540.22H71.45 M110.98 537.42H147.71" stroke="#303040" stroke-width="1.1"/><rect x="59.83" y="530.10" width="6" height="2.2" rx="1" fill="#7a7a88" stroke="#404050" stroke-width="0.7"/><rect x="59.83" y="539.17" width="6" height="2.2" rx="1" fill="#7a7a88" stroke="#404050" stroke-width="0.7"/><rect x="120.28" y="536.40" width="6" height="2.2" rx="1" fill="#7a7a88" stroke="#404050" stroke-width="0.7"/><path d="M33.79 529.10h4l1.6 2l-1.6 2h-4z" fill="#e8d8dc" stroke="#303040" stroke-width="0.9"/><path d="M33.79 538.22h4l1.6 2l-1.6 2h-4z" fill="#e8d8dc" stroke="#303040" stroke-width="0.9"/><path d="M147.13 535.42h4l1.6 2l-1.6 2h-4z" fill="#e8d8dc" stroke="#303040" stroke-width="0.9"/><ellipse cx="39.83" cy="507.39" rx="2.2" ry="1.7" fill="#383840"/><ellipse cx="44.48" cy="511.97" rx="2.2" ry="1.7" fill="#383840"/><ellipse cx="49.53" cy="521.27" rx="2.2" ry="1.7" fill="#383840"/><ellipse cx="54.36" cy="525.92" rx="2.2" ry="1.7" fill="#383840"/><circle cx="71.69" cy="530.57" r="2" fill="#202028"/><path d="M53.55 519.64h2l-1 1.4z" fill="#000"/><path d="M68.43 531.10v3.4h2" stroke="#404050" fill="none" stroke-width="0.8"/><rect x="138.13" y="576.85" width="9" height="2.4" fill="#a0c4f4"/></svg></div>
<!-- /outline -->
<!-- status -->
<div class="t" style="left:7.4px;top:641.40px;font-size:12px;color:#333;letter-spacing:-0.542px">EHANDBOOK_NAVIGATOR License</div>
<div class="a" style="left:198px;top:640px;width:1px;height:14px;border-left:1px dotted #d4d4d4"></div>
<div class="t" style="left:202px;top:641.40px;font-size:12px;color:#333;letter-spacing:-0.055px">Data Source:</div>
<div class="a" style="left:274px;top:638px;width:203px;height:18px;border:1px solid #a8a8a8;background:#fff"></div>
<div class="t" style="left:276.5px;top:641.40px;font-size:12px;color:#000;letter-spacing:0.167px">None</div>
<svg class="a" style="left:464px;top:645px" width="7" height="4" viewBox="0 0 7 4"><path d="M0 0h7L3.5 4z" fill="#000"/></svg>
<svg class="a" style="left:482px;top:641px" width="12" height="12" viewBox="0 0 12 12"><circle cx="6" cy="6" r="3.2" fill="none" stroke="#8a8a8a" stroke-width="2.4"/><path d="M6 0v12M0 6h12M1.8 1.8l8.4 8.4M10.2 1.8l-8.4 8.4" stroke="#8a8a8a" stroke-width="1.8"/><circle cx="6" cy="6" r="1.3" fill="#fff"/></svg>
<svg class="a" style="left:498px;top:641px" width="15" height="11" viewBox="0 0 15 11"><path d="M1 6l6-5 7 3-6 5z" fill="#b8b8b8" stroke="#7a7a7a" stroke-width="0.8"/><path d="M1 6v2l7 2.5 6-4.5V4" fill="#8a8a8a" stroke="#6a6a6a" stroke-width="0.8"/></svg>
<div class="a" style="left:518px;top:640px;width:1px;height:14px;background:#a0a0a0"></div>
<svg class="a" style="left:526px;top:641px" width="13" height="12" viewBox="0 0 13 12"><rect x="0.5" y="2.5" width="10" height="9" fill="#f0f0f0" stroke="#9a9a9a"/><path d="M2 5h7M2 7.5h7M2 10h7" stroke="#a8a8a8"/><rect x="4" y="0.5" width="8" height="5" fill="#e8e8e8" stroke="#9a9a9a"/></svg>
<svg class="a" style="left:543px;top:641px" width="13" height="12" viewBox="0 0 13 12"><rect x="0.5" y="2.5" width="10" height="9" fill="#f0f0f0" stroke="#9a9a9a"/><path d="M2 5h7M2 7.5h7M2 10h7" stroke="#a8a8a8"/><rect x="4" y="0.5" width="8" height="5" fill="#e8e8e8" stroke="#9a9a9a"/></svg>
<svg class="a" style="left:562px;top:641px" width="13" height="12" viewBox="0 0 13 12"><rect x="0.5" y="2.5" width="10" height="9" fill="#f0f0f0" stroke="#9a9a9a"/><path d="M2 5h7M2 7.5h7M2 10h7" stroke="#a8a8a8"/><rect x="4" y="0.5" width="8" height="5" fill="#e8e8e8" stroke="#9a9a9a"/></svg>
<svg class="a" style="left:581px;top:642px" width="11" height="11" viewBox="0 0 11 11"><path d="M1 0.5L10.5 5.5L1 10.5z" fill="#a8a8a8"/></svg>
<svg class="a" style="left:600px;top:642px" width="10" height="10" viewBox="0 0 10 10"><rect x="0.5" y="0.5" width="9" height="9" fill="#9a9a9a" stroke="#888"/></svg>
<div class="a" style="left:615px;top:640px;width:1px;height:14px;border-left:1px dotted #d0d0d0"></div>
<div class="a" style="left:1px;top:676px;width:1009px;height:1px;background:#e0e0e0"></div>
<div class="a" style="left:2px;top:660px;width:1px;height:12px;border-left:1px dotted #e0e0e0"></div>
<svg class="a" style="left:8px;top:660px" width="13" height="12" viewBox="0 0 13 12"><rect x="0.5" y="0.5" width="12" height="11" fill="#e6f6fa" stroke="#b0a070"/><path d="M0.5 0.5h12" stroke="#787878"/><path d="M3 2.5h7M3 4.5h7M3 6.5h4" stroke="#a8bcd8" stroke-width="1.2"/></svg>
<div class="a" style="left:23px;top:657px;width:19px;height:17px;background:#d6e9fb;border:1px solid #a8d0f4"></div>
<svg class="a" style="left:27px;top:660px" width="13" height="12" viewBox="0 0 13 12"><rect x="0.5" y="0.5" width="12" height="11" fill="#eef4fa" stroke="#a09070"/><rect x="2" y="1" width="3" height="10" fill="#7a9cc8"/><path d="M7 3h3M7 5h3M7 7h2" stroke="#9ab0d0"/></svg>
<svg class="a" style="left:45px;top:660px" width="12" height="12" viewBox="0 0 12 12"><rect x="0.5" y="0.5" width="11" height="11" fill="#eef6fa" stroke="#b0a070"/><circle cx="6.5" cy="5" r="1.8" fill="#6a8ab8"/><path d="M3.5 11c0-3 6-3 6 0" fill="#6a8ab8"/></svg>
<div class="a" style="left:63px;top:657px;width:1px;height:17px;background:#c0c0c0"></div>
<div class="a" style="left:68px;top:665px;width:10px;height:2px;background:#2c56b0"></div>
<svg class="a" style="left:86px;top:661px" width="11" height="10" viewBox="0 0 11 10"><path d="M0 5h10.5M5.25 0v10" stroke="#2c56b0" stroke-width="2"/></svg>
<svg class="a" style="left:104px;top:661px" width="11" height="11" viewBox="0 0 11 11"><text x="5.5" y="5" font-size="5.5" font-family="Liberation Sans" fill="#b0b0b0" text-anchor="middle">100</text><text x="5.5" y="10.5" font-size="6" font-family="Liberation Sans" fill="#b0b0b0" text-anchor="middle">%</text></svg>
<svg class="a" style="left:122px;top:661px" width="12" height="11" viewBox="0 0 12 11"><path d="M1 1l3.5 3.5M11 1L7.5 4.5M1 10l3.5-3.5M11 10L7.5 6.5" stroke="#2c56b0" stroke-width="1.8"/><path d="M0.5 0.5h4l-4 4zM11.5 0.5h-4l4 4zM0.5 10.5h4l-4-4zM11.5 10.5h-4l4-4z" fill="#2c56b0"/></svg>
<!-- panel borders -->
<div class="a" style="left:253px;top:77px;width:2px;height:556px;background:#ececec"></div>
<div class="a" style="left:252px;top:77px;width:1px;height:557px;background:#d4d4d4"></div>
<div class="a" style="left:255px;top:77px;width:1px;height:557px;background:#d4d4d4"></div>
<div class="a" style="left:1px;top:633px;width:252px;height:1px;background:#d4d4d4"></div>
<div class="a" style="left:255px;top:633px;width:755px;height:1px;background:#d4d4d4"></div>

</div>
</body></html>
